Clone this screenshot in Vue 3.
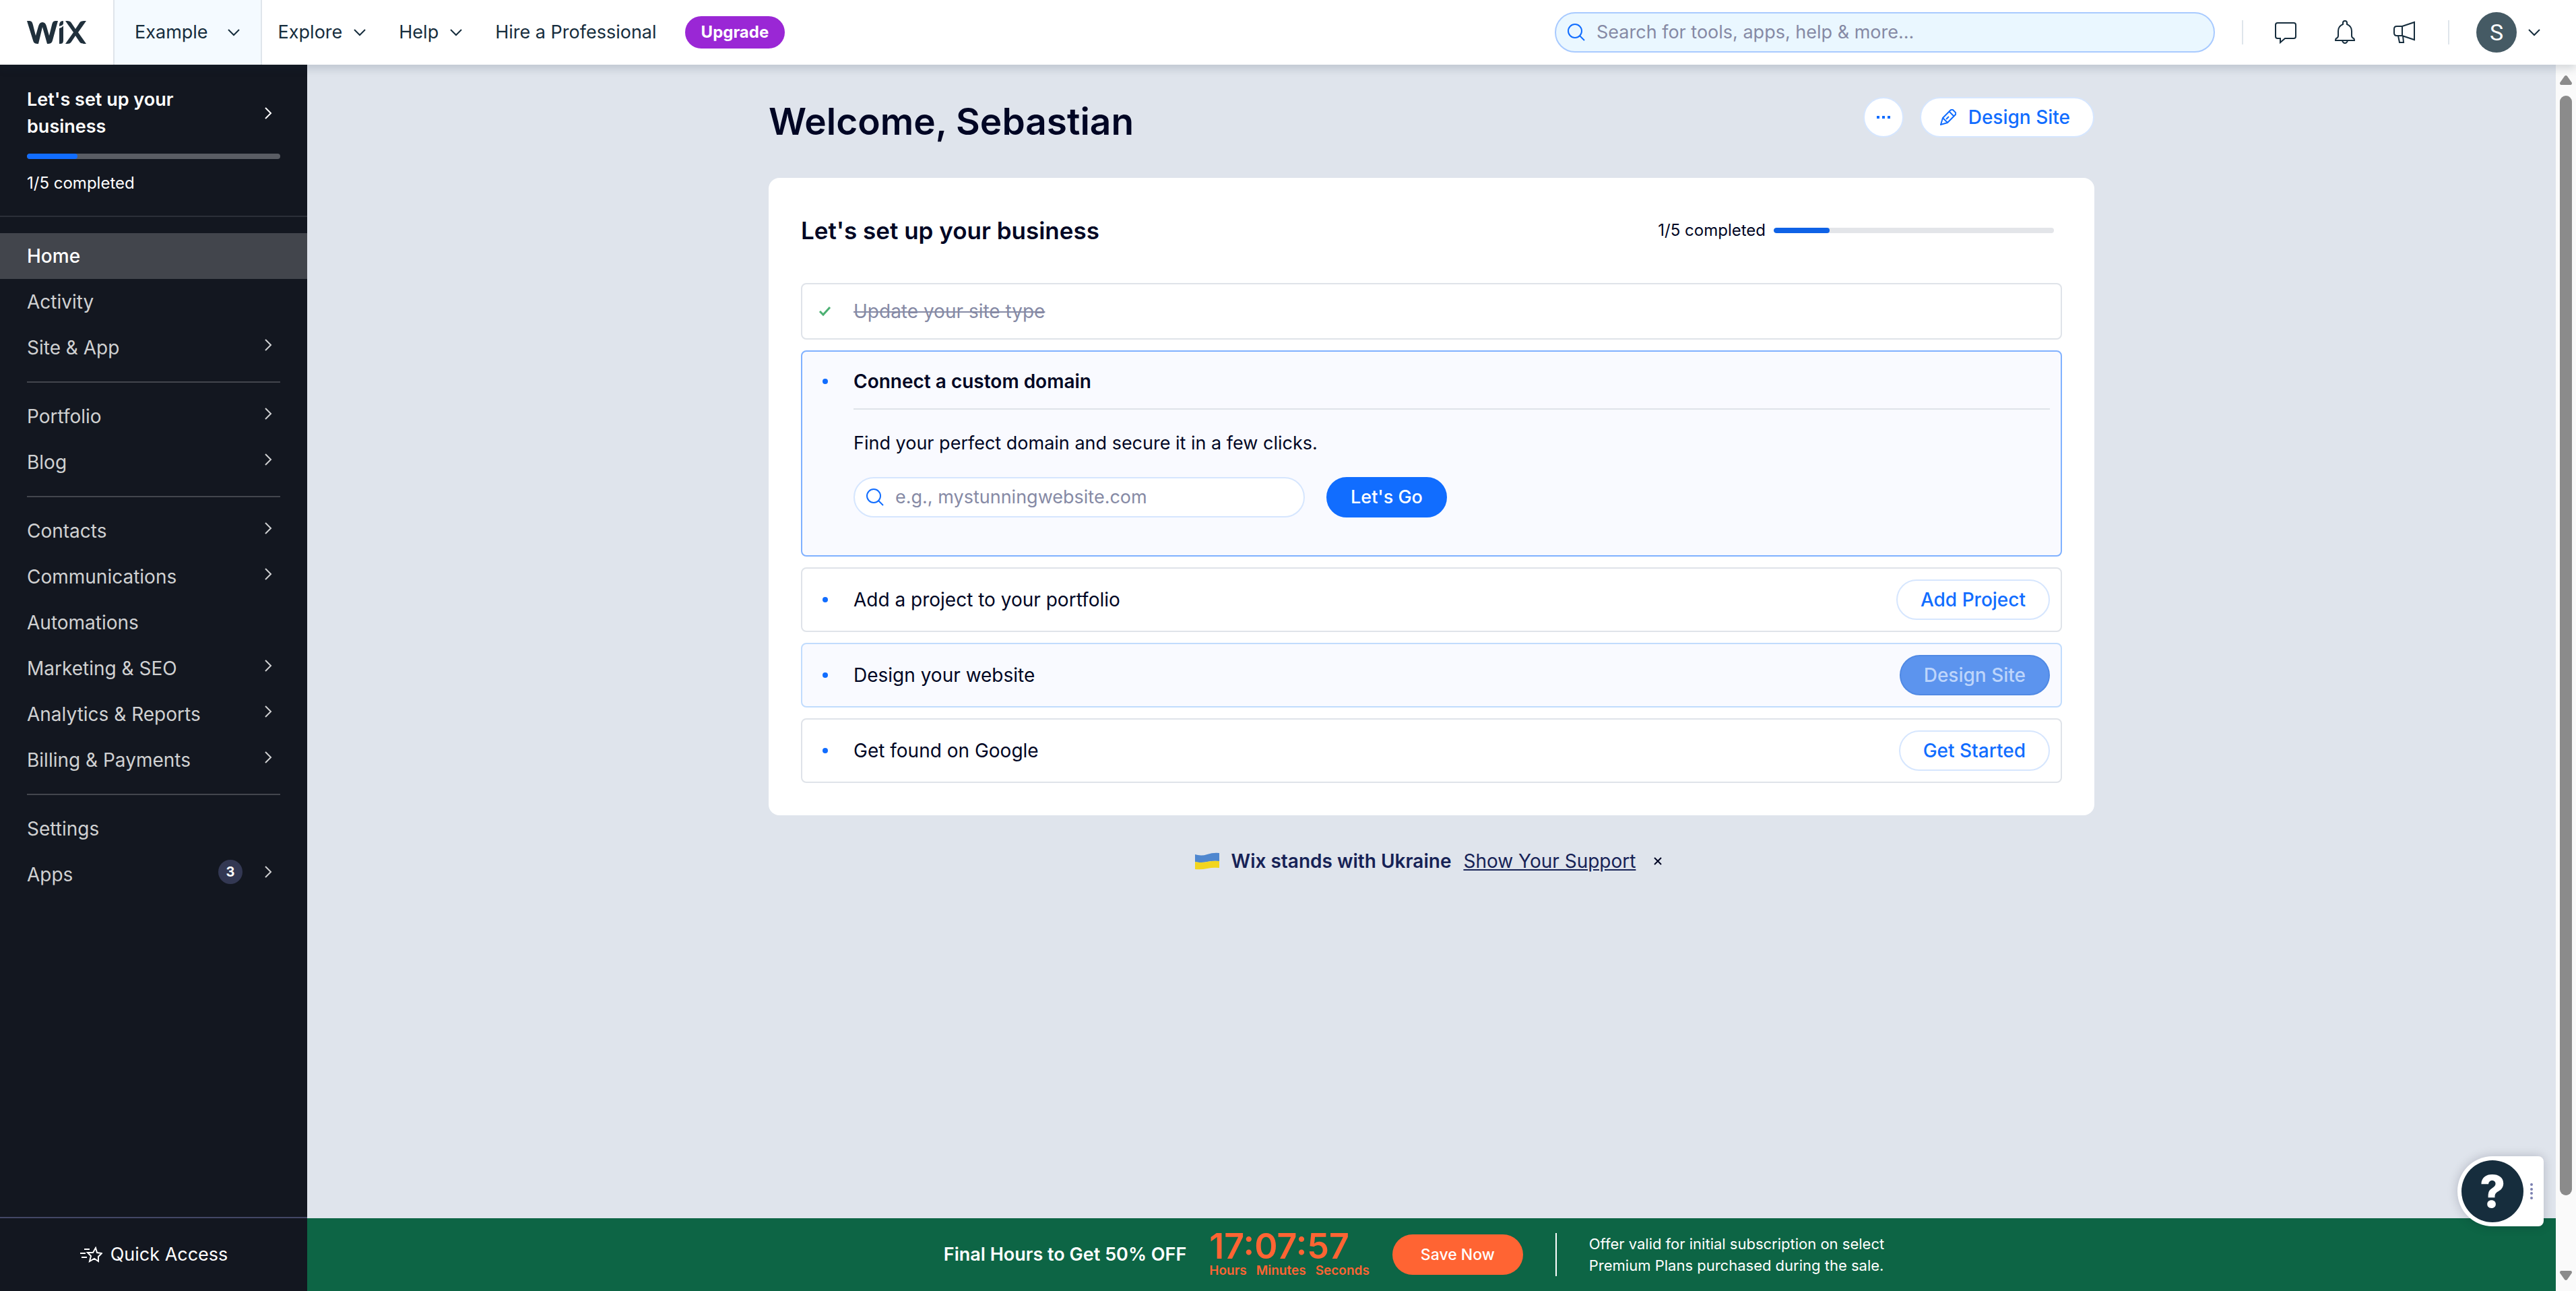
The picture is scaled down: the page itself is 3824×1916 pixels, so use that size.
<script setup>
const topLinks = [
  { label: 'Explore', menu: true },
  { label: 'Help', menu: true },
  { label: 'Hire a Professional', menu: false },
]

const navGroups = [
  [{ label: 'Home', active: true }, { label: 'Activity' }, { label: 'Site & App', more: true }],
  [{ label: 'Portfolio', more: true }, { label: 'Blog', more: true }],
  [
    { label: 'Contacts', more: true },
    { label: 'Communications', more: true },
    { label: 'Automations' },
    { label: 'Marketing & SEO', more: true },
    { label: 'Analytics & Reports', more: true },
    { label: 'Billing & Payments', more: true },
  ],
  [{ label: 'Settings' }, { label: 'Apps', more: true, badge: 3 }],
]

const steps = [
  { label: 'Add a project to your portfolio', action: 'Add Project' },
  { label: 'Design your website', action: 'Design Site', hovered: true },
  { label: 'Get found on Google', action: 'Get Started' },
]

const timerParts = ['Hours', 'Minutes', 'Seconds']
const progress = (1 / 5) * 100
</script>

<template>
  <div class="page">
    <header class="topbar">
      <a class="logo" href="#" aria-label="Wix">
        <svg width="88" height="34" viewBox="0 0 88 34">
          <path d="M0 0h3c4 0 5 2 6 6l4 16 4-14c1-4 3-6 6-6s5 2 6 6l4 14 4-16c1-4 2-6 6-6h3l-8 29c-1 4-3 5-8 5l-7-25-6 25c-5 0-7-1-8-5z" />
          <path d="M48 8c0-5 1-8 6-8v3c0 3-2 4-6 5zM48 11c3-1 5-2 6-4v21c0 5-1 6-6 6z" />
          <path d="M57 0c5 0 7 0 9 3l6 9 6-9c2-3 4-3 10-3L76 17l12 17c-5 0-8 0-10-3l-6-9-6 9c-2 3-4 3-9 3l12-17z" />
        </svg>
      </a>
      <button class="site-switch" type="button">
        Example
        <svg class="chev" width="20" height="12" viewBox="0 0 20 12"><path d="M2 2l8 8 8-8" /></svg>
      </button>
      <nav class="toplinks" aria-label="Main">
        <a v-for="l in topLinks" :key="l.label" href="#">
          {{ l.label }}
          <svg v-if="l.menu" class="chev" width="20" height="12" viewBox="0 0 20 12"><path d="M2 2l8 8 8-8" /></svg>
        </a>
      </nav>
      <button class="upgrade" type="button">Upgrade</button>
      <label class="search">
        <svg class="lens" width="28" height="28" viewBox="0 0 28 28"><circle cx="12" cy="12" r="10" /><path d="M19 19l7 7" /></svg>
        <input type="search" aria-label="Search" placeholder="Search for tools, apps, help &amp; more..." />
      </label>
      <div class="tools">
        <button type="button" aria-label="Inbox">
          <svg width="34" height="36" viewBox="0 0 34 36"><path d="M5 4h24q3 0 3 3v17q0 3-3 3H16l-7 6v-6H5q-3 0-3-3V7q0-3 3-3z" /></svg>
        </button>
        <button type="button" aria-label="Notifications">
          <svg width="34" height="36" viewBox="0 0 34 36"><path d="M14 6V4q0-3 3-3t3 3v2q7 3 7 10v7q0 3 3 4 1 1 1 3H3q0-2 1-3 3-1 3-4v-7q0-7 7-10zM13 30q1 4 4 4t4-4" /></svg>
        </button>
        <button type="button" aria-label="What's new">
          <svg width="34" height="36" viewBox="0 0 34 36"><path d="M14 9H6q-4 0-4 4v6q0 4 4 4h8zM14 9l18-6v26l-18-6M8 23l2 10h6l-1-10" /></svg>
        </button>
      </div>
      <button class="account" type="button" aria-label="Account">
        <span class="avatar">S</span>
        <svg class="chev" width="20" height="12" viewBox="0 0 20 12"><path d="M2 2l8 8 8-8" /></svg>
      </button>
    </header>

    <div class="body">
      <aside class="sidebar">
        <a class="setup" href="#">
          <span class="setup-head">
            <span class="setup-title">Let's set up your business</span>
            <svg class="chev" width="12" height="20" viewBox="0 0 12 20"><path d="M2 2l8 8-8 8" /></svg>
          </span>
          <span class="track"><span class="fill" :style="{ width: progress + '%' }"></span></span>
          <span class="setup-note">1/5 completed</span>
        </a>
        <nav class="menu" aria-label="Dashboard">
          <ul v-for="(group, i) in navGroups" :key="i">
            <li v-for="item in group" :key="item.label">
              <a href="#" :class="{ active: item.active }">
                <span class="menu-label">{{ item.label }}</span>
                <span v-if="item.badge" class="badge">{{ item.badge }}</span>
                <svg v-if="item.more" class="chev" width="12" height="18" viewBox="0 0 12 18"><path d="M2 1l8 8-8 8" /></svg>
              </a>
            </li>
          </ul>
        </nav>
        <button class="quick" type="button">
          <svg width="34" height="24" viewBox="0 0 34 24"><path d="M24 2l2 7 7 1-5 5 0 7-6-4-7 4 2-8-5-5 8 0zM7 4h8M1 10h8M3 16h8" /></svg>
          Quick Access
        </button>
      </aside>

      <div class="right">
        <main class="main">
          <div class="content">
            <div class="heading">
              <h1>Welcome, Sebastian</h1>
              <div class="heading-actions">
                <button class="round" type="button" aria-label="More actions">
                  <svg width="20" height="4" viewBox="0 0 20 4"><rect width="4" height="4" /><rect x="8" width="4" height="4" /><rect x="16" width="4" height="4" /></svg>
                </button>
                <button class="pill design" type="button">
                  <svg width="24" height="24" viewBox="0 0 24 24"><path d="M1 23l3-10L15 2q2-2 4-1l4 4q1 2-1 4L11 20zM4 13l7 7M14 4l6 6M9 15l4-4" /></svg>
                  Design Site
                </button>
              </div>
            </div>

            <section class="card">
              <div class="card-head">
                <h2>Let's set up your business</h2>
                <div class="card-progress">
                  <span>1/5 completed</span>
                  <span class="track"><span class="fill" :style="{ width: progress + '%' }"></span></span>
                </div>
              </div>
              <div class="steps">
                <div class="step done">
                  <span class="mark"><svg width="20" height="16" viewBox="0 0 20 16"><path d="M2 8l5 5L17 2" /></svg></span>
                  <s>Update your site type</s>
                </div>
                <div class="step open">
                  <span class="mark"><span class="dot"></span></span>
                  <div class="open-body">
                    <h3>Connect a custom domain</h3>
                    <p>Find your perfect domain and secure it in a few clicks.</p>
                    <form class="domain" @submit.prevent>
                      <label class="domain-field">
                        <svg class="lens" width="28" height="28" viewBox="0 0 28 28"><circle cx="12" cy="12" r="10" /><path d="M19 19l7 7" /></svg>
                        <input type="text" aria-label="Domain" placeholder="e.g., mystunningwebsite.com" />
                      </label>
                      <button class="pill primary" type="submit">Let's Go</button>
                    </form>
                  </div>
                </div>
                <div v-for="s in steps" :key="s.label" class="step" :class="{ hovered: s.hovered }">
                  <span class="mark"><span class="dot"></span></span>
                  <span class="step-label">{{ s.label }}</span>
                  <button class="pill" type="button">{{ s.action }}</button>
                </div>
              </div>
            </section>

            <div class="support">
              <svg width="36" height="26" viewBox="0 0 36 26">
                <path fill="#4f87cf" d="M0 3q9 3 18 0t18-2v12q-9-1-18 1T0 14z" />
                <path fill="#f2d51f" d="M0 14q9 2 18 0t18-1v10q-9-1-18 1T0 25z" />
              </svg>
              <strong>Wix stands with Ukraine</strong>
              <a href="#">Show Your Support</a>
              <button type="button" aria-label="Dismiss">
                <svg width="14" height="14" viewBox="0 0 14 14"><path d="M2 2l10 10M12 2L2 12" /></svg>
              </button>
            </div>
          </div>
        </main>

        <footer class="promo">
          <strong class="promo-title">Final Hours to Get 50% OFF</strong>
          <div class="timer">
            <span class="clock">17:07:57</span>
            <span class="units"><span v-for="u in timerParts" :key="u">{{ u }}</span></span>
          </div>
          <button class="save" type="button">Save Now</button>
          <p>Offer valid for initial subscription on select<br />Premium Plans purchased during the sale.</p>
        </footer>
        <div class="help">
          <button type="button" aria-label="Help">?</button>
          <svg width="4" height="24" viewBox="0 0 4 24"><circle cx="2" cy="2" r="2" /><circle cx="2" cy="9" r="2" /><circle cx="2" cy="15" r="2" /><circle cx="2" cy="22" r="2" /></svg>
        </div>
      </div>

      <div class="scrollbar" aria-hidden="true">
        <svg width="18" height="14" viewBox="0 0 18 14"><path d="M7 1q2-2 4 0l7 10q0 3-2 3H2q-2 0-2-3z" /></svg>
        <span class="thumb"></span>
        <svg width="18" height="14" viewBox="0 0 18 14"><path d="M7 13q2 2 4 0l7-10q0-3-2-3H2q-2 0-2 3z" /></svg>
      </div>
    </div>
  </div>
</template>

<style>
html,
body {
  margin: 0;
}
</style>

<style scoped>
.page {
  display: flex;
  flex-direction: column;
  min-height: 100vh;
  font-family: Inter, 'Noto Sans', sans-serif;
  font-size: 28px;
  line-height: 40px;
  color: #000624;
}
.page * {
  box-sizing: border-box;
}
button,
input {
  font: inherit;
  color: inherit;
  background: none;
  border: 0;
  padding: 0;
  margin: 0;
}
button {
  cursor: pointer;
}
a {
  color: inherit;
  text-decoration: none;
}
h1,
h2,
h3,
p,
ul {
  margin: 0;
  padding: 0;
  list-style: none;
}
svg {
  display: block;
  flex: none;
}
.chev {
  fill: none;
  stroke: currentColor;
  stroke-width: 2;
}
.lens {
  fill: none;
  stroke: #116dff;
  stroke-width: 2;
}

/* top bar */
.topbar {
  position: relative;
  z-index: 2;
  display: flex;
  align-items: center;
  height: 96px;
  background: #fff;
  color: #162d3d;
  font-size: 27px;
  box-shadow: 0 6px 12px rgba(22, 45, 61, 0.16);
}
.logo {
  padding: 0 40px;
  fill: #20303c;
}
.site-switch {
  display: flex;
  align-items: center;
  gap: 28px;
  height: 96px;
  padding: 0 30px;
  border: solid #dfe5eb;
  border-width: 0 2px;
  background: #f4faff;
}
.toplinks {
  display: flex;
  gap: 48px;
  margin-left: 24px;
}
.toplinks a {
  display: flex;
  align-items: center;
  gap: 16px;
}
.upgrade {
  height: 48px;
  margin-left: 42px;
  padding: 0 24px;
  border-radius: 24px;
  background: #9a27d5;
  color: #fff;
  font-size: 24px;
  font-weight: 700;
}
.search {
  display: flex;
  align-items: center;
  flex: 0 1 980px;
  height: 60px;
  margin-left: auto;
  padding: 0 16px;
  gap: 16px;
  border: 2px solid #a8caff;
  border-radius: 30px;
  background: #eaf7ff;
}
.search input,
.domain-field input {
  flex: 1;
  min-width: 0;
  outline: 0;
}
input::placeholder {
  color: #868aa5;
  opacity: 1;
}
.tools {
  display: flex;
  align-items: center;
  gap: 54px;
  height: 36px;
  margin-left: 40px;
  padding: 0 48px 0 46px;
  border: solid #dfe5eb;
  border-width: 0 2px;
}
.tools svg {
  fill: none;
  stroke: #162d3d;
  stroke-width: 2;
}
.account {
  display: flex;
  align-items: center;
  gap: 16px;
  margin: 0 52px 0 40px;
}
.avatar {
  width: 60px;
  border-radius: 50%;
  background: #455a64;
  color: #fff;
  font-family: Roboto, sans-serif;
  font-size: 34px;
  line-height: 60px;
  text-align: center;
}

.body {
  display: flex;
  flex: 1;
}

/* sidebar */
.sidebar {
  display: flex;
  flex-direction: column;
  flex: 0 0 456px;
  background: #131720;
  color: #fff;
}
.setup {
  display: flex;
  flex-direction: column;
  padding: 32px 40px 28px;
  border-bottom: 2px solid #2b2f38;
}
.setup-head {
  display: flex;
  align-items: center;
  justify-content: space-between;
  padding-right: 12px;
}
.setup-title {
  width: 260px;
  font-size: 27px;
  font-weight: 600;
}
.track {
  display: block;
  height: 8px;
  border-radius: 4px;
  overflow: hidden;
}
.fill {
  display: block;
  height: 8px;
  border-radius: 4px;
}
.setup .track {
  margin: 20px 0 16px;
  background: #5a5d64;
}
.setup .fill {
  background: #116dff;
}
.setup-note {
  font-size: 24px;
}
.menu {
  flex: 1;
  padding-top: 24px;
}
.menu ul + ul::before {
  content: '';
  display: block;
  height: 2px;
  margin: 16px 40px;
  background: #43464d;
}
.menu a {
  display: flex;
  align-items: center;
  gap: 32px;
  height: 68px;
  padding: 0 52px 0 40px;
  color: #d0d1d2;
}
.menu a.active {
  background: #42454c;
  color: #fff;
  font-weight: 500;
}
.menu-label {
  flex: 1;
}
.menu .chev,
.badge {
  margin-bottom: 8px;
}
.badge {
  width: 36px;
  border-radius: 18px;
  background: #333853;
  color: #fff;
  font-size: 20px;
  line-height: 36px;
  font-weight: 700;
  text-align: center;
}
.quick {
  display: flex;
  align-items: center;
  justify-content: center;
  gap: 12px;
  height: 110px;
  border-top: 2px solid #434766;
  font-size: 27px;
}
.quick svg {
  fill: none;
  stroke: #fff;
  stroke-width: 2;
}

/* main column */
.right {
  position: relative;
  display: flex;
  flex-direction: column;
  flex: 1;
  min-width: 0;
  background: #dfe4ec;
}
.main {
  flex: 1;
}
.content {
  max-width: 1968px;
  margin: 0 auto;
  padding-top: 48px;
}
.heading {
  display: flex;
  align-items: flex-start;
  justify-content: space-between;
  height: 120px;
}
h1 {
  font-size: 55px;
  line-height: 72px;
  font-weight: 600;
}
.heading-actions {
  display: flex;
  gap: 24px;
}
.pill,
.round {
  display: flex;
  align-items: center;
  height: 60px;
  padding: 0 34px;
  border: 2px solid #d6e6fe;
  border-radius: 30px;
  background: #fff;
  color: #116dff;
  font-weight: 500;
}
.round {
  justify-content: center;
  width: 60px;
  padding: 0;
}
.round svg {
  fill: #116dff;
}
.design {
  gap: 18px;
  padding: 0 34px 0 28px;
}
.design svg {
  fill: none;
  stroke: #116dff;
  stroke-width: 2;
}
.card {
  padding: 48px;
  border-radius: 16px;
  background: #fff;
}
.card-head {
  display: flex;
  align-items: center;
  justify-content: space-between;
  height: 60px;
  margin-bottom: 48px;
  padding-right: 12px;
}
h2 {
  font-size: 35px;
  font-weight: 600;
}
.card-progress {
  display: flex;
  align-items: center;
  gap: 12px;
  font-size: 24px;
}
.card-progress .track {
  width: 416px;
  background: #e3e5e9;
}
.card-progress .fill {
  background: #0f62e6;
}
.steps {
  display: flex;
  flex-direction: column;
  gap: 16px;
}
.step {
  display: flex;
  align-items: center;
  padding: 16px;
  border: 2px solid #dfe3e9;
  border-radius: 8px;
}
.mark {
  display: flex;
  align-items: center;
  justify-content: center;
  flex: none;
  width: 36px;
  height: 40px;
  margin-right: 24px;
}
.mark svg {
  fill: none;
  stroke: #4bb072;
  stroke-width: 3;
}
.dot {
  width: 8px;
  height: 8px;
  border-radius: 50%;
  background: #116dff;
}
.step-label {
  flex: 1;
}
.step.done {
  padding: 20px 16px;
  color: #868aa5;
}
.step.hovered {
  border-color: #c1dcfd;
  background: #f9faff;
}
.step.hovered .pill {
  border-color: #5089e4;
  background: #5c94ee;
  color: #bdd5fb;
}
.step.open {
  align-items: flex-start;
  padding: 24px 16px 56px;
  border-color: #80b1ff;
  background: #f9faff;
}
.open-body {
  flex: 1;
  font-size: 27px;
}
h3 {
  padding-bottom: 20px;
  border-bottom: 2px solid #dfe3e9;
  font-size: 28px;
  font-weight: 600;
}
.open-body p {
  margin: 30px 0;
}
.domain {
  display: flex;
  gap: 32px;
}
.domain-field {
  display: flex;
  align-items: center;
  gap: 16px;
  width: 670px;
  height: 60px;
  padding: 0 16px;
  border: 2px solid #d6e6fe;
  border-radius: 30px;
  background: #fff;
}
.pill.primary {
  border-color: #116dff;
  background: #116dff;
  color: #fff;
}
.support {
  display: flex;
  align-items: center;
  justify-content: center;
  gap: 18px;
  margin-top: 48px;
  color: #162256;
}
.support strong {
  font-weight: 600;
}
.support a {
  text-decoration: underline;
}
.support button {
  padding: 8px;
}
.support button svg {
  stroke: #000624;
  stroke-width: 2;
}

/* promo strip */
.promo {
  display: flex;
  align-items: center;
  justify-content: center;
  height: 108px;
  padding-right: 52px;
  background: #0d6545;
  color: #fff;
}
.promo-title {
  margin-right: 34px;
  font-size: 27px;
  font-weight: 600;
}
.timer {
  display: flex;
  flex-direction: column;
  margin-right: 34px;
  color: #ff6433;
  font-weight: 600;
}
.clock {
  font-size: 52px;
  line-height: 48px;
}
.units {
  display: flex;
  gap: 14px;
  font-size: 19px;
  line-height: 24px;
}
.save {
  height: 60px;
  padding: 0 42px;
  border-radius: 30px;
  background: #ff6433;
  font-size: 23px;
  font-weight: 500;
}
.promo p {
  margin-left: 48px;
  padding-left: 48px;
  border-left: 2px solid #fff;
  font-size: 22px;
  line-height: 32px;
}

/* floating help button */
.help {
  position: absolute;
  right: 18px;
  bottom: 96px;
  display: flex;
  align-items: center;
  gap: 10px;
  height: 104px;
  padding: 0 16px 0 6px;
  border-radius: 52px 8px 8px 52px;
  background: #fff;
  box-shadow: 0 0 16px rgba(0, 6, 36, 0.2);
}
.help button {
  width: 92px;
  height: 92px;
  border-radius: 50%;
  background: #162d3d;
  color: #fff;
  font-size: 66px;
  font-weight: 800;
}
.help svg {
  fill: #7a7fb0;
}

/* window scrollbar */
.scrollbar {
  display: flex;
  flex-direction: column;
  align-items: center;
  gap: 16px;
  flex: 0 0 30px;
  padding: 16px 0;
  background: #fafafa;
}
.scrollbar svg {
  fill: #8b8b8b;
}
.thumb {
  flex: 1;
  width: 18px;
  margin-bottom: 96px;
  border-radius: 9px;
  background: #8b8b8b;
}
</style>
